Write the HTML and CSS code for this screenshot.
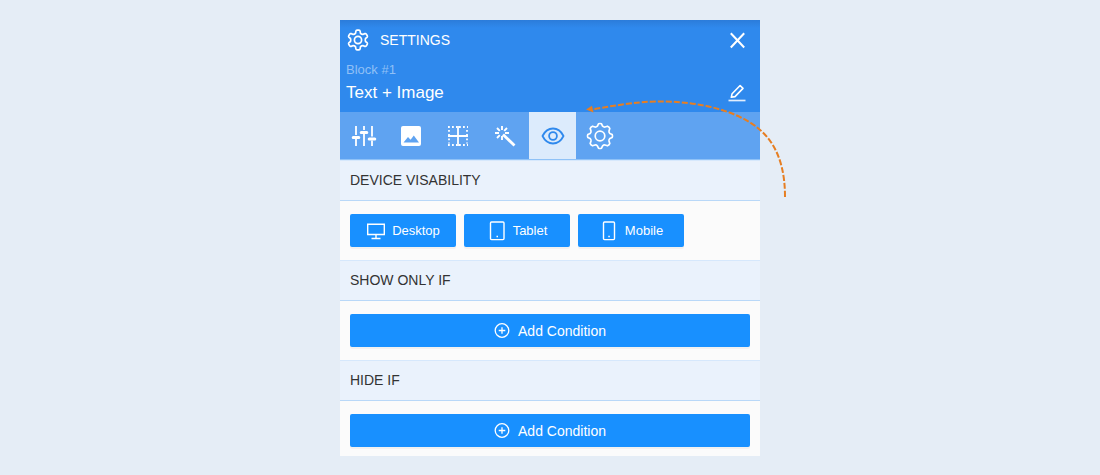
FILE: index.html
```
<!DOCTYPE html>
<html lang="en">
<head>
    <meta charset="UTF-8">
    <meta name="viewport" content="width=device-width, initial-scale=1.0">
    <title>Block Settings</title>
    <link rel="stylesheet" href="styles.css">
</head>
<body>
    <main class="panel">
        <header class="panel-header">
            <div class="title-row">
                <svg class="title-icon" width="24" height="24" viewBox="0 0 24 24" fill="none" stroke="currentColor" stroke-width="1.7" stroke-linejoin="round">
                    <path d="M9.9 3.2Q10.100 2.200 11 2.200H13Q13.900 2.200 14.100 3.200L14.500 5.300Q15.700 6.500 17.200 6.300L18.900 5.600Q19.800 5.300 20.300 6.100L21.300 7.800Q21.700 8.600 21 9.300L19.500 10.500Q19 12 19.500 13.500L21 14.700Q21.700 15.400 21.300 16.200L20.300 17.900Q19.800 18.700 18.900 18.400L17.200 17.700Q15.700 17.500 14.500 18.700L14.100 20.800Q13.900 21.800 13 21.800H11Q10.100 21.800 9.900 20.800L9.500 18.700Q8.300 17.500 6.800 17.700L5.100 18.400Q4.200 18.700 3.700 17.900L2.700 16.200Q2.300 15.400 3 14.700L4.500 13.500Q5 12 4.500 10.500L3 9.300Q2.300 8.600 2.700 7.800L3.700 6.100Q4.200 5.300 5.100 5.600L6.800 6.300Q8.300 6.500 9.500 5.300z"/>
                    <circle cx="12" cy="12" r="3.6"/>
                </svg>
                <h1>SETTINGS</h1>
                <button type="button" class="icon-btn" aria-label="Close">
                    <svg width="18" height="18" viewBox="0 0 18 18" fill="none" stroke="currentColor" stroke-width="2">
                        <path d="M2.8 2.2L16.200 16.500M16.200 2.200L2.800 16.500"/>
                    </svg>
                </button>
            </div>
            <p class="block-id">Block #1</p>
            <div class="name-row">
                <p class="block-name">Text + Image</p>
                <button type="button" class="icon-btn" aria-label="Rename block">
                    <svg width="18" height="18" viewBox="0 0 18 18" fill="none" stroke="currentColor">
                        <path d="M3.3 13.3l.8-3.600 8-8.200 2.900 2.900-8 8.200z" stroke-width="1.600" stroke-linejoin="round"/>
                        <path d="M.5 16.500h17" stroke-width="1.700" opacity=".85"/>
                    </svg>
                </button>
            </div>
        </header>

        <nav class="tabs">
            <button type="button" class="tab" aria-label="Options">
                <svg width="27" height="22" viewBox="0 0 27 22" fill="none" stroke="currentColor">
                    <path d="M5 1v9M5 14v7M13 1v4M13 9v12M21 1v10.500M21 15.500V21" stroke-width="1.800"/>
                    <path d="M2.200 12.500h5.600M10.200 7.500h5.600M18.200 14h5.600" stroke-width="3" stroke-linecap="round"/>
                </svg>
            </button>
            <button type="button" class="tab" aria-label="Image">
                <svg width="23" height="22" viewBox="0 0 23 22" fill="currentColor">
                    <path fill-rule="evenodd" d="M3 1h16a2 2 0 0 1 2 2v16a2 2 0 0 1-2 2H3a2 2 0 0 1-2-2V3a2 2 0 0 1 2-2zM3.500 17.500h15.500l-5.200-7-3.200 4.300-2.600-2.800z"/>
                </svg>
            </button>
            <button type="button" class="tab" aria-label="Spacing">
                <svg width="23" height="22" viewBox="0 0 23 22" fill="none" stroke="currentColor">
                    <path d="M11 1v20M1 11h20" stroke-width="1.800"/>
                    <path d="M1 2h9M12 2h9M1 20h9M12 20h9M2 5v5M2 13.500v5M20 5v5M20 13.500v5" stroke-width="1.800" stroke-dasharray="1.800 2.200"/>
                </svg>
            </button>
            <button type="button" class="tab" aria-label="Effects">
                <svg width="23" height="22" viewBox="0 0 23 22" fill="none" stroke="currentColor">
                    <path d="M9 9.500l11.500 11" stroke-width="2.800"/>
                    <path d="M8 1v4M8 11v4M1 8h4M11 8h4M3 3l2.800 2.800M13 3l-2.800 2.800M3 13l2.800-2.800" stroke-width="1.900"/>
                </svg>
            </button>
            <button type="button" class="tab active" aria-label="Visibility">
                <svg width="24" height="22" viewBox="0 0 24 22" fill="none" stroke="currentColor" stroke-width="1.800">
                    <path d="M1.500 11C4 6 7.500 3.500 12 3.500S20 6 22.500 11C20 16 16.500 18.500 12 18.500S4 16 1.500 11z" stroke-linejoin="round"/>
                    <circle cx="12" cy="11" r="3.900"/>
                </svg>
            </button>
            <button type="button" class="tab" aria-label="Advanced">
                <svg width="28" height="28" viewBox="-14 -14 28 28" fill="none" stroke="currentColor" stroke-width="1.700" stroke-linejoin="round">
                    <path d="M-1.500-12.200Q0-12.800 1.500-12.200L2.600-9.800Q3.700-8.800 5-9L7.500-9.800Q9.200-9.200 9.800-7.500L9-5Q8.800-3.700 9.800-2.600L12.200-1.500Q12.800 0 12.200 1.500L9.800 2.600Q8.800 3.700 9 5L9.800 7.500Q9.200 9.200 7.500 9.800L5 9Q3.700 8.800 2.600 9.800L1.500 12.200Q0 12.800-1.500 12.200L-2.600 9.800Q-3.700 8.800-5 9L-7.500 9.800Q-9.200 9.200-9.800 7.500L-9 5Q-8.800 3.700-9.800 2.600L-12.200 1.500Q-12.800 0-12.200-1.500L-9.800-2.600Q-8.800-3.700-9-5L-9.800-7.500Q-9.200-9.200-7.500-9.800L-5-9Q-3.700-8.800-2.600-9.800z"/>
                    <circle r="4.800"/>
                </svg>
            </button>
        </nav>

        <section>
            <h2 class="section-title">DEVICE VISABILITY</h2>
            <div class="section-body devices">
                <button type="button" class="btn btn-device">
                    <svg width="20" height="20" viewBox="0 0 20 20" fill="none" stroke="currentColor" stroke-width="1.400">
                        <path d="M1.700 3.200h16.600v10.300H1.700zM10 13.500v4M5.500 17.500h9"/>
                    </svg>
                    Desktop
                </button>
                <button type="button" class="btn btn-device">
                    <svg width="20" height="20" viewBox="0 0 20 20" fill="none" stroke="currentColor" stroke-width="1.400">
                        <rect x="3.500" y="1" width="13.500" height="17.600" rx="1"/>
                        <path d="M9.500 15.500h1.500"/>
                    </svg>
                    Tablet
                </button>
                <button type="button" class="btn btn-device">
                    <svg width="20" height="20" viewBox="0 0 20 20" fill="none" stroke="currentColor" stroke-width="1.400">
                        <rect x="4.500" y="1" width="11" height="17.600" rx="1"/>
                        <path d="M9.300 15.500h1.500"/>
                    </svg>
                    Mobile
                </button>
            </div>
        </section>

        <section>
            <h2 class="section-title">SHOW ONLY IF</h2>
            <div class="section-body">
                <button type="button" class="btn btn-add">
                    <svg width="16" height="15" viewBox="0 0 16 15" fill="none" stroke="currentColor" stroke-width="1.300">
                        <circle cx="8" cy="7.500" r="6.800"/>
                        <path d="M8 4.200v6.600M4.700 7.500h6.600"/>
                    </svg>
                    Add Condition
                </button>
            </div>
        </section>

        <section>
            <h2 class="section-title">HIDE IF</h2>
            <div class="section-body">
                <button type="button" class="btn btn-add">
                    <svg width="16" height="15" viewBox="0 0 16 15" fill="none" stroke="currentColor" stroke-width="1.300">
                        <circle cx="8" cy="7.500" r="6.800"/>
                        <path d="M8 4.200v6.600M4.700 7.500h6.600"/>
                    </svg>
                    Add Condition
                </button>
            </div>
        </section>

        <!-- arrow pointing back at the visibility tab -->
        <svg class="arrow" width="206" height="102" viewBox="0 0 206 102" fill="none">
            <path d="M201 99C201 55 184 32 156 19C120 2 75 2 50 5C35 7 20 9 9 11.500" stroke="#e67e22" stroke-width="2" stroke-dasharray="6 2"/>
            <path d="M2 11.500L8 7.800L9.500 14.500z" fill="#e67e22"/>
        </svg>
    </main>
</body>
</html>
```
FILE: styles.css
```
body {
    font-family: "Liberation Sans", Arial, sans-serif;
    background-color: #e5edf6;
    margin: 0;
    padding: 20px;
}
h1,
h2,
p {
    margin: 0;
    font-weight: normal;
}
button {
    border: none;
    padding: 0;
    font-family: inherit;
    cursor: pointer;
}
svg {
    display: block;
    flex-shrink: 0;
}
.panel {
    position: relative;
    max-width: 420px;
    margin: 0 auto;
    background-color: #fbfbfb;
}
.panel-header {
    background: linear-gradient(#2b7cda, #2f89ed 8px);
    color: #fff;
    padding: 8px 14px 7px 6px;
}
.title-row,
.name-row {
    display: flex;
    align-items: center;
}
.title-row h1 {
    font-size: 14px;
    line-height: 24px;
    margin-left: 10px;
}
.icon-btn {
    background: none;
    color: #fff;
    margin-left: auto;
}
.block-id {
    font-size: 13px;
    line-height: 16px;
    color: #8fc0f6;
    margin-top: 10px;
}
.name-row {
    margin-top: 3px;
}
.block-name {
    font-size: 17px;
    line-height: 24px;
}
.tabs {
    display: flex;
    padding-left: 1px;
    background-color: #5fa3f1;
    border-bottom: 1px solid #8fc2f7;
}
.tab {
    display: flex;
    justify-content: center;
    align-items: center;
    width: 47px;
    height: 47px;
    background: none;
    color: #fff;
}
.tab.active {
    background-color: #dcebfc;
    color: #2f89ed;
}
.section-title {
    font-size: 14px;
    line-height: 39px;
    padding: 0 10px;
    color: #333;
    background-color: #eaf2fc;
    border-top: 1px solid #d6e8fc;
    border-bottom: 1px solid #b9d8f8;
}
.section-body {
    padding: 13px 10px;
}
section:last-of-type .section-body {
    padding-bottom: 9px;
}
.devices {
    display: flex;
    gap: 8px;
}
.btn {
    display: flex;
    justify-content: center;
    align-items: center;
    height: 33px;
    background-color: #1890ff;
    color: #fff;
    border-radius: 2px;
    box-shadow: 0 2px 0 rgba(0, 0, 0, 0.04);
}
.btn-device {
    width: 106px;
    gap: 6px;
    font-size: 13px;
}
.btn-add {
    width: 100%;
    gap: 8px;
    font-size: 14px;
}
.arrow {
    position: absolute;
    top: 78px;
    left: 244px;
    pointer-events: none;
}
```
